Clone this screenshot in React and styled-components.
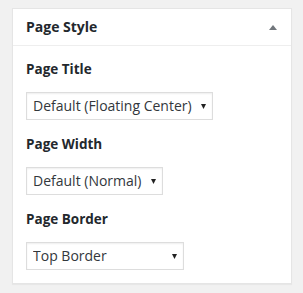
import React from "react";
import styled, { createGlobalStyle } from "styled-components";

const Global = createGlobalStyle`
  html, body { margin: 0; padding: 0; background: #f1f1f1; }
  body { font-family: "Open Sans", "Noto Sans", sans-serif; }
`;

const Page = styled.div`
  padding: 8px 11px 10px 12px;
`;

const Panel = styled.section`
  width: 280px;
  box-sizing: border-box;
  background: #fff;
  border: 1px solid #e5e5e5;
  box-shadow: 0 1px 1px rgba(0, 0, 0, 0.04);
`;

const Header = styled.header`
  height: 36px;
  display: flex;
  align-items: center;
  justify-content: space-between;
  padding: 0 14px 0 13px;
  border-bottom: 1px solid #eee;
`;

const Title = styled.h2`
  margin: 0;
  font-size: 14px;
  font-weight: 700;
  color: #23282d;
  line-height: 20px;
`;

const Toggle = styled.svg`
  width: 8px;
  height: 5px;
  display: block;
  fill: #72777c;
`;

const Body = styled.div`
  display: flex;
  flex-direction: column;
  gap: 14px;
  padding: 13px 13px 13px 13px;
`;

const Field = styled.div`
  display: flex;
  flex-direction: column;
  align-items: flex-start;
  gap: 13px;
`;

const Label = styled.label`
  font-size: 13.5px;
  font-weight: 700;
  color: #23282d;
  line-height: 20px;
`;

const SelectWrap = styled.div`
  position: relative;
  width: ${(p) => p.$w}px;
`;

const Select = styled.select`
  appearance: none;
  -webkit-appearance: none;
  width: 100%;
  height: 28px;
  box-sizing: border-box;
  margin: 0;
  padding: 0 20px 0 6px;
  border: 1px solid #ddd;
  border-radius: 0;
  background: #fff;
  color: #32373c;
  font-family: "Open Sans", "Noto Sans", sans-serif;
  font-size: 14px;
  line-height: 26px;
  box-shadow: inset 0 1px 2px rgba(0, 0, 0, 0.07);
`;

const Arrow = styled.svg`
  position: absolute;
  right: ${(p) => p.$r}px;
  top: 12px;
  width: 5px;
  height: 5px;
  fill: #222;
  pointer-events: none;
`;

function Dropdown({ width, arrowRight, value }) {
  return (
    <SelectWrap $w={width}>
      <Select defaultValue={value}>
        <option>{value}</option>
      </Select>
      <Arrow $r={arrowRight} viewBox="0 0 5 5">
        <polygon points="0,0 5,0 2.5,5" />
      </Arrow>
    </SelectWrap>
  );
}

export default function App() {
  return (
    <Page>
      <Global />
      <Panel>
        <Header>
          <Title>Page Style</Title>
          <Toggle viewBox="0 0 8 5">
            <polygon points="0,5 8,5 4,0" />
          </Toggle>
        </Header>
        <Body>
          <Field>
            <Label>Page Title</Label>
            <Dropdown width={187} arrowRight={7} value="Default (Floating Center)" />
          </Field>
          <Field>
            <Label>Page Width</Label>
            <Dropdown width={137} arrowRight={7} value="Default (Normal)" />
          </Field>
          <Field>
            <Label>Page Border</Label>
            <Dropdown width={158} arrowRight={7} value="Top Border" />
          </Field>
        </Body>
      </Panel>
    </Page>
  );
}
